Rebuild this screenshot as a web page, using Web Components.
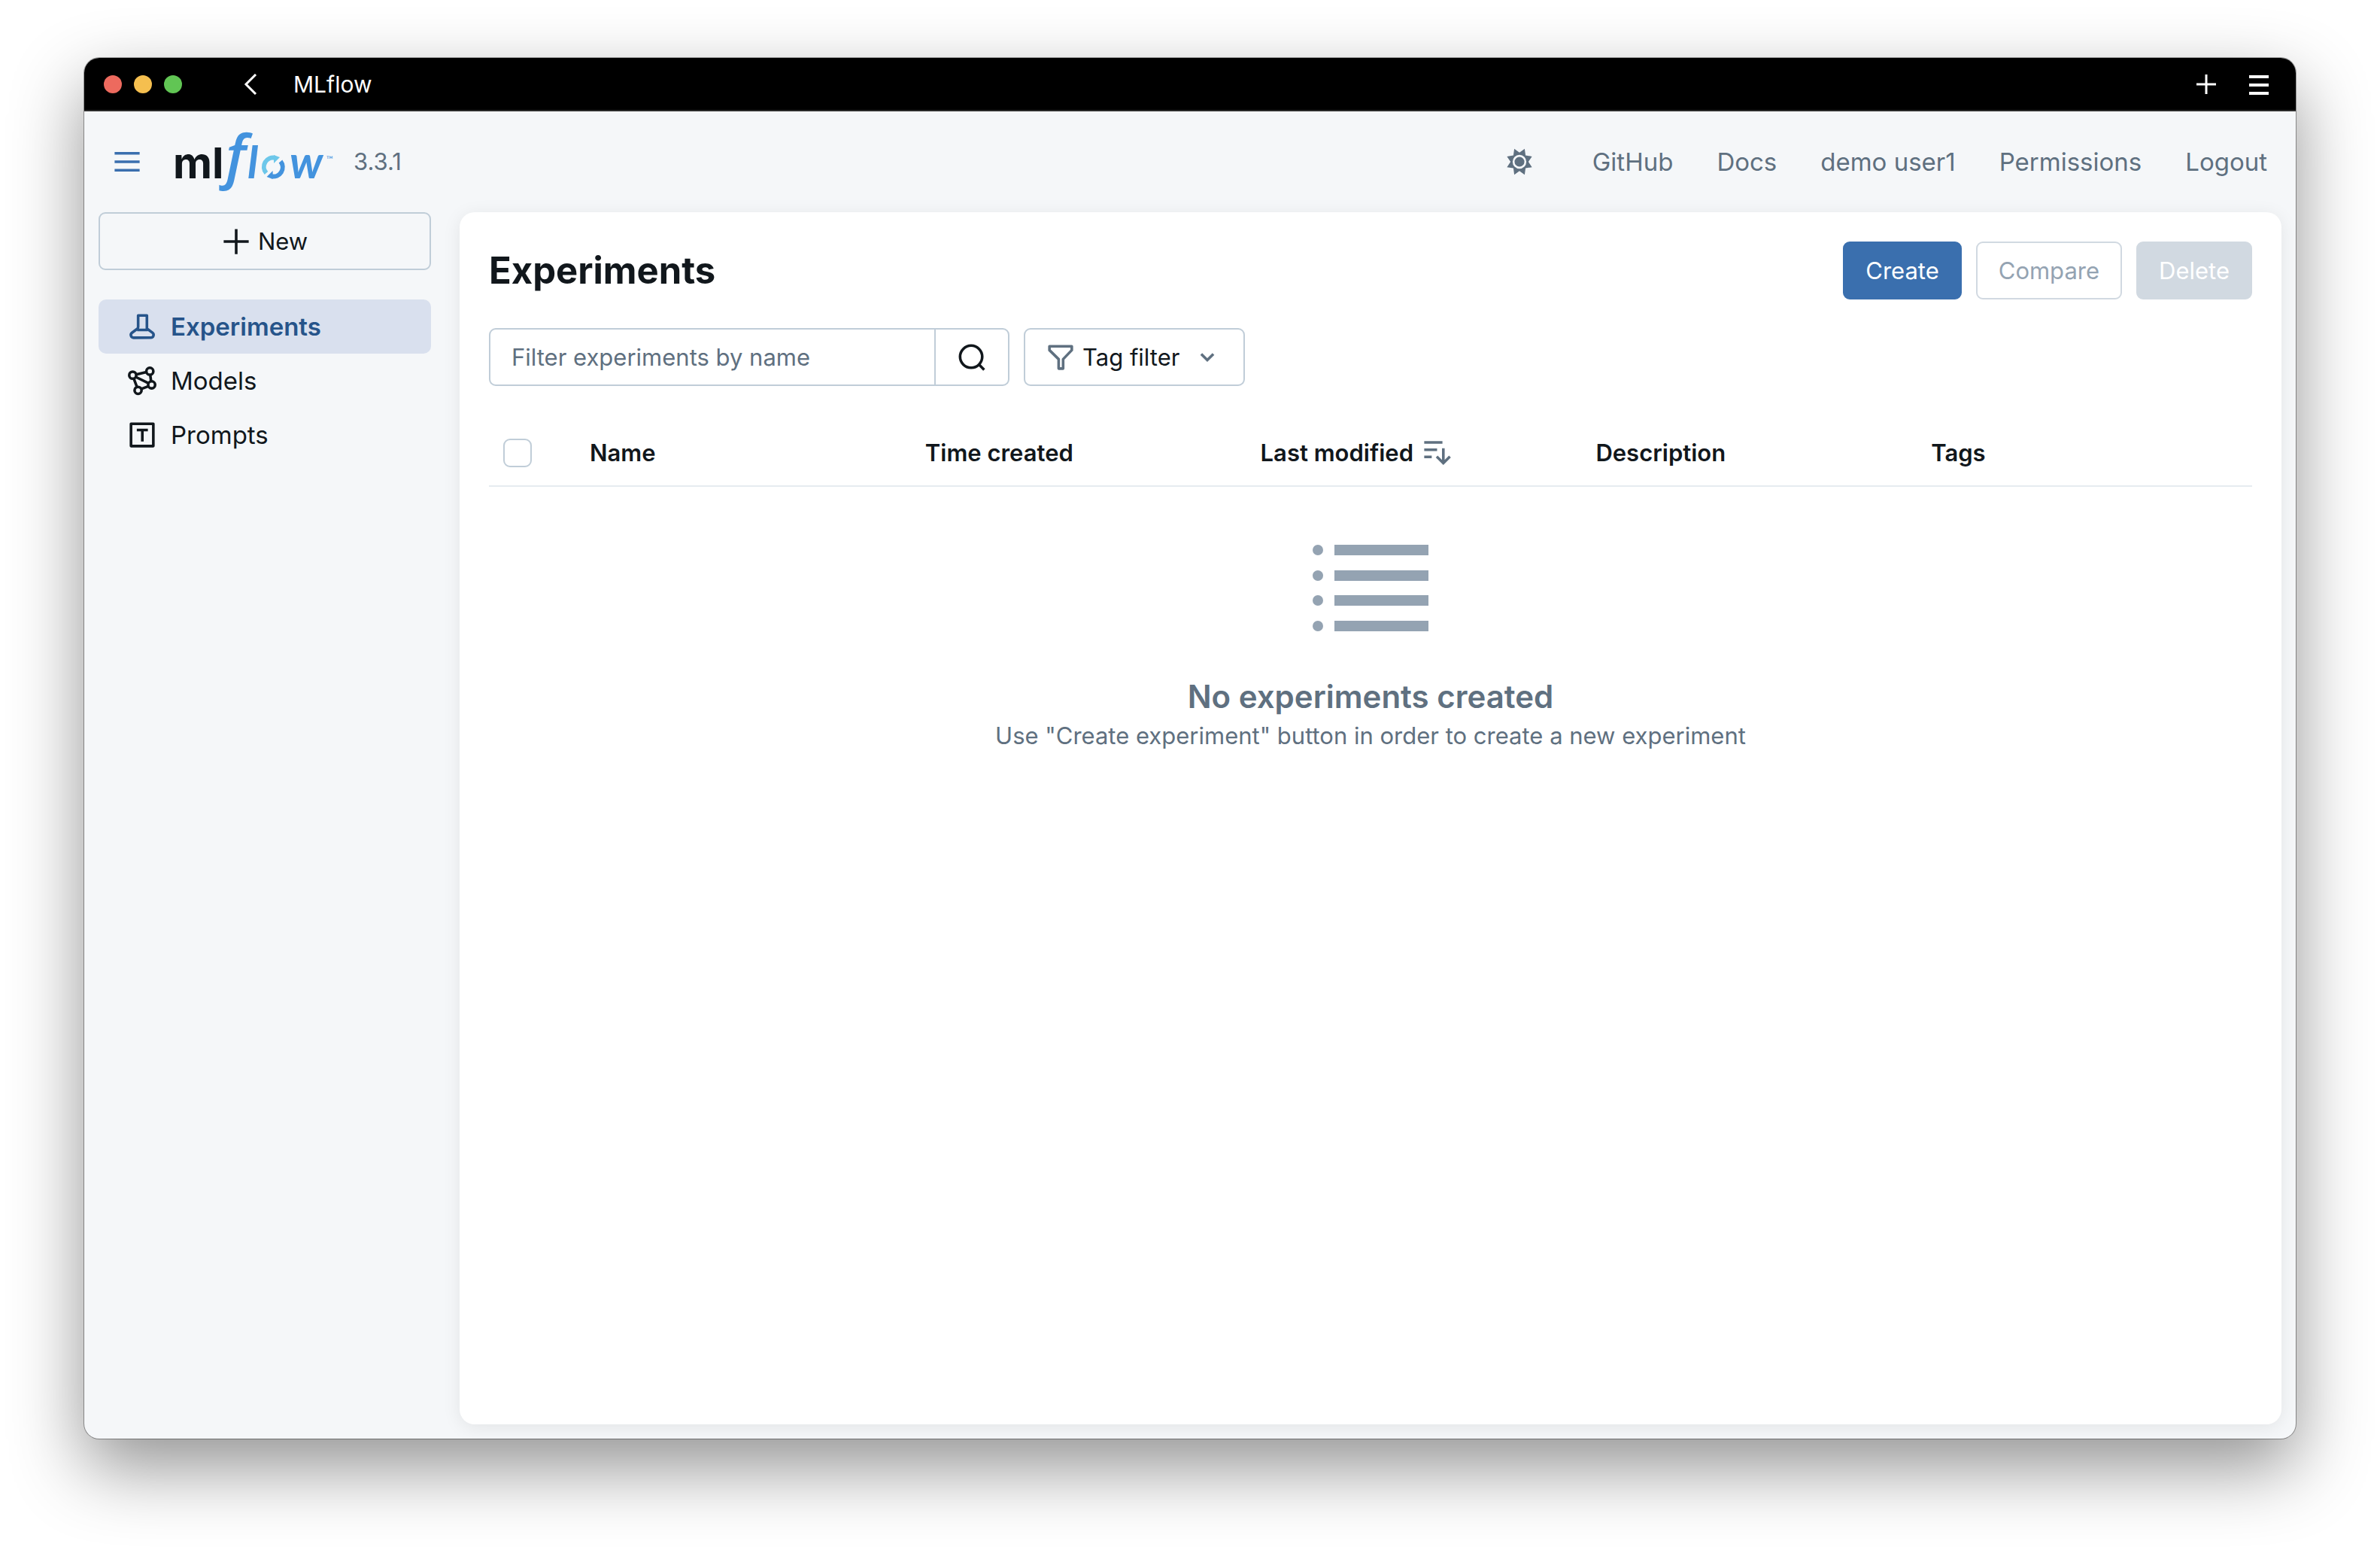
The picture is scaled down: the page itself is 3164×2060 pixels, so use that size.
<!DOCTYPE html>
<html lang="en">
<head>
<meta charset="utf-8">
<title>MLflow</title>
<style>
  body {
    --text: #11171c;
    --muted: #5f7080;
    --border: #c0cdd8;
    --primary: #3a6fae;
    --bg: #f5f7f9;
    display: flex;
    box-sizing: border-box;
    min-height: 100vh;
    margin: 0;
    padding: 77px 112px 148px;
    background: #fff;
    color: var(--text);
    font: 31px/48px Inter, "Liberation Sans", sans-serif;
  }
</style>
</head>
<body>
<app-window heading="MLflow">
  <app-header version="3.3.1">
    <header-link href="#github">GitHub</header-link>
    <header-link href="#docs">Docs</header-link>
    <header-link href="#user">demo user1</header-link>
    <header-link href="#permissions">Permissions</header-link>
    <header-link href="#logout">Logout</header-link>
  </app-header>
  <app-layout>
    <side-nav slot="nav">
      <nav-item icon="beaker" href="#experiments" active>Experiments</nav-item>
      <nav-item icon="models" href="#models">Models</nav-item>
      <nav-item icon="prompts" href="#prompts">Prompts</nav-item>
    </side-nav>
    <experiments-page></experiments-page>
  </app-layout>
</app-window>

<script>
const ICONS = {
  menu: '<path fill="currentColor" d="M15 4H1V2.5h14zm0 4.75H1v-1.5h14zm0 4.75H1V12h14z"/>',
  plus: '<path fill="currentColor" d="M7.25 7.25V1h1.5v6.25H15v1.5H8.75V15h-1.5V8.75H1v-1.5z"/>',
  search: '<circle cx="7.6" cy="7.6" r="6.2"/><path d="M11.9 11.9l3 3"/>',
  filter: '<path stroke-linejoin="round" d="M1.75 1.75h12.5v2.2L9.4 9v5.25H6.9V9L1.75 3.95z"/>',
  chevron: '<path d="M4.6 6.1L8 9.5l3.4-3.4"/>',
  sort: '<path d="M1 2.1h10.2M1 6.2h7.2M1 10.2h4.2M11.7 5.4v8.4M8 10l3.7 3.7 3.7-3.7"/>',
  beaker: '<path stroke-linejoin="round" d="M5.75 1.75h4.9v7.4l3.1 2.3a1.55 1.55 0 0 1-.9 2.8H3.2a1.55 1.55 0 0 1-.9-2.8l3.1-2.3q.35-.4.35-1zM5.2 9.9h5.9"/>',
  models: '<circle cx="2.7" cy="4.9" r="1.95"/><circle cx="12.3" cy="2.7" r="1.95"/><circle cx="13.3" cy="10.3" r="1.95"/><circle cx="5.7" cy="13.4" r="1.95"/><path d="M4.6 4.5l5.8-1.3M12.5 4.6l.5 3.8M4.4 5.9l7.2 3.5M3.3 6.8l1.8 4.7M7.5 12.6l4-1.5"/>',
  prompts: '<rect x="1.75" y="1.75" width="12.5" height="12.5" stroke-linejoin="round"/><path d="M5 5.3h6.2M8.1 5.3v6.4"/>',
  sun: '<path fill="currentColor" stroke="none" d="M8 2.8l2.9-2.1.5 3.7 3.6.6-2 3 2 3-3.6.6-.5 3.7L8 13.2l-2.9 2.1-.5-3.7L1 11l2-3-2-3 3.6-.6.5-3.7z"/><circle cx="8" cy="8" r="3.3" fill="currentColor" stroke="var(--bg)" stroke-width="1.1"/>'
}

function define(name, template) {
  customElements.define(name, class extends HTMLElement {
    constructor() {
      super()
      this.attachShadow({mode: 'open'})
    }

    connectedCallback() {
      this.shadowRoot.innerHTML = typeof template === 'function' ? template(this) : template
    }
  })
}

define('ui-icon', el => `<style>
    :host { display: inline-flex; flex: none; width: 38px; height: 38px; }
    svg { width: 100%; height: 100%; overflow: visible; }
  </style>
  <svg viewBox="0 0 16 16" fill="none" stroke-width="1.5" ${/menu|plus/.test(el.getAttribute('name')) ? '' : 'stroke="currentColor"'} aria-hidden="true">${ICONS[el.getAttribute('name')]}</svg>`)

define('app-window', el => `<style>
    :host {
      display: flex;
      flex: 1;
      flex-direction: column;
      overflow: hidden;
      border-radius: 20px;
      background: var(--bg);
      box-shadow: 0 0 0 1px rgba(0,0,0,0.35), 0 38px 96px rgba(0,0,0,0.43);
    }
    .bar {
      display: flex;
      align-items: center;
      height: 69px;
      padding: 0 36px 0 26px;
      border-bottom: 2px solid #2a2a2a;
      background: #000;
      color: #fff;
      font-size: 30px;
    }
    .lights { display: flex; gap: 16px; }
    .lights i { width: 24px; height: 24px; border-radius: 50%; background: #ed6a5e; }
    .lights i:nth-child(2) { background: #f5bf4f; }
    .lights i:nth-child(3) { background: #61c554; }
    button { display: flex; padding: 0; border: 0; background: none; color: inherit; }
    .back { margin: 0 48px 0 82px; }
    .title { flex: 1; }
    .add { margin-right: 44px; }
    svg { fill: none; stroke: currentColor; stroke-width: 3; }
    .burger { stroke-width: 4; }
  </style>
  <div class="bar">
    <span class="lights"><i></i><i></i><i></i></span>
    <button class="back" aria-label="Back"><svg width="18" height="28"><path d="M16 1L3 14l13 13"/></svg></button>
    <span class="title">${el.getAttribute('heading')}</span>
    <button class="add" aria-label="New tab"><svg width="26" height="28"><path d="M0 14h26M13 1v26"/></svg></button>
    <button aria-label="Menu"><svg class="burger" width="26" height="28"><path d="M0 4h26M0 15h26M0 26h26"/></svg></button>
  </div>
  <slot></slot>`)

define('mlflow-logo', `<style>
    :host { display: block; }
    svg { display: block; overflow: visible; }
    .blue { fill: #4393de; }
    .ml { font: 700 57px Inter, sans-serif; }
    .slant { font: italic 700 60px Lato, sans-serif; }
    .f { font: italic 600 78px "Open Sans", sans-serif; }
    .tm { font: 12px Lato, sans-serif; }
  </style>
  <svg width="214" height="84" viewBox="0 0 214 84" role="img" aria-label="mlflow">
    <text class="ml" x="0" y="64" fill="#11171c">ml</text>
    <text class="blue f" x="70" y="62">f</text>
    <text class="blue slant" x="99" y="64">l</text>
    <path d="M124 57A12.300 12.300 0 0 1 136 36.800" fill="none" stroke="#6cc7ea" stroke-width="6"/>
    <path d="M134 33l8 3-8 8z" fill="#6cc7ea"/>
    <path d="M143 41.500A12.300 12.300 0 0 1 130.600 61.200" fill="none" stroke="#4393de" stroke-width="6"/>
    <path d="M132.600 65l-8-3 8-8z" fill="#4393de"/>
    <text class="blue slant" x="155" y="64">w</text>
    <text class="blue tm" x="204" y="43">™</text>
  </svg>`)

define('header-link', el => `<style>
    :host { display: block; }
    a { color: var(--muted); font-size: 33px; text-decoration: none; }
  </style>
  <a href="${el.getAttribute('href')}"><slot></slot></a>`)

define('app-header', el => `<style>
    :host {
      display: flex;
      align-items: center;
      height: 134px;
      padding: 0 38px;
      color: var(--muted);
    }
    button { display: flex; padding: 0; border: 0; background: none; color: var(--muted); }
    .menu { margin-right: 42px; color: var(--primary); }
    .version { flex: 1; margin-left: 26px; }
    nav { display: flex; gap: 58px; margin-left: 78px; }
  </style>
  <button class="menu" aria-label="Toggle sidebar"><ui-icon name="menu"></ui-icon></button>
  <mlflow-logo></mlflow-logo>
  <span class="version">${el.getAttribute('version')}</span>
  <button aria-label="Switch theme"><ui-icon name="sun"></ui-icon></button>
  <nav><slot></slot></nav>`)

define('app-layout', `<style>
    :host { display: flex; flex: 1; padding: 0 19px 19px; gap: 38px; }
    main {
      flex: 1;
      min-width: 0;
      padding: 39px;
      border-radius: 20px;
      background: #fff;
      box-shadow: 0 4px 24px rgba(0,0,0,0.08);
    }
  </style>
  <slot name="nav"></slot>
  <main><slot></slot></main>`)

define('side-nav', `<style>
    :host { display: flex; flex-direction: column; flex: none; width: 442px; }
    ui-button { margin-bottom: 39px; }
  </style>
  <ui-button icon="plus">New</ui-button>
  <nav><slot></slot></nav>`)

define('nav-item', el => `<style>
    :host { display: block; }
    a {
      display: flex;
      align-items: center;
      gap: 19px;
      height: 72px;
      padding-left: 39px;
      border-radius: 10px;
      color: inherit;
      font-size: 33px;
      text-decoration: none;
    }
    :host([active]) a { background: #d9e0ee; color: #26548a; font-weight: 600; }
  </style>
  <a href="${el.getAttribute('href')}"><ui-icon name="${el.getAttribute('icon')}"></ui-icon><slot></slot></a>`)

define('ui-button', el => `<style>
    :host { display: flex; }
    button {
      display: flex;
      flex: 1;
      align-items: center;
      justify-content: center;
      gap: 10px;
      height: 77px;
      padding: 0 28px;
      border: 2px solid var(--border);
      border-radius: 9px;
      background: none;
      color: inherit;
      font: inherit;
    }
    :host([kind=primary]) button { border-color: var(--primary); background: var(--primary); color: #fff; }
    button:disabled { border-color: #d1d9e1; color: #94a3b2; }
    :host([kind=danger]) button { background: #d1d9e1; color: #fff; }
    .lead { color: var(--icon-color, inherit); }
    .caret { margin: 0 1px 0 8px; color: var(--muted); }
  </style>
  <button ${el.hasAttribute('disabled') ? 'disabled' : ''}>
    ${el.hasAttribute('icon') ? `<ui-icon class="lead" name="${el.getAttribute('icon')}"></ui-icon>` : ''}
    <slot></slot>
    ${el.hasAttribute('caret') ? '<ui-icon class="caret" name="chevron"></ui-icon>' : ''}
  </button>`)

define('search-box', el => `<style>
    :host {
      display: flex;
      box-sizing: border-box;
      width: 692px;
      height: 77px;
      border: 2px solid var(--border);
      border-radius: 9px;
    }
    input {
      flex: 1;
      min-width: 0;
      padding: 0 28px;
      border: 0;
      outline: 0;
      background: none;
      color: inherit;
      font: inherit;
    }
    input::placeholder { color: var(--muted); opacity: 1; }
    button {
      display: flex;
      align-items: center;
      justify-content: center;
      width: 98px;
      padding: 0;
      border: 0;
      border-left: 2px solid var(--border);
      background: none;
      color: inherit;
    }
  </style>
  <input type="text" aria-label="${el.getAttribute('placeholder')}" placeholder="${el.getAttribute('placeholder')}">
  <button aria-label="Search"><ui-icon name="search"></ui-icon></button>`)

define('empty-state', el => `<style>
    :host {
      display: flex;
      flex-direction: column;
      align-items: center;
      padding-top: 77px;
      color: var(--muted);
    }
    svg { margin-bottom: 58px; fill: #94a3b2; }
    h2 { margin: 0; font-size: 42px; line-height: 56px; font-weight: 600; }
  </style>
  <svg width="154" height="116" viewBox="0 0 154 116" aria-hidden="true">
    ${[7, 41, 74, 108].map(y => `<circle cx="7" cy="${y}" r="7"/><rect x="29" y="${y - 7}" width="125" height="14"/>`).join('')}
  </svg>
  <h2>${el.getAttribute('heading')}</h2>
  <slot></slot>`)

define('experiments-table', `<style>
    :host { display: block; }
    table { width: 100%; border-collapse: collapse; table-layout: fixed; }
    th {
      height: 86px;
      padding: 0 19px;
      border-bottom: 2px solid #e6ebf0;
      font-weight: 600;
      text-align: left;
    }
    td { padding: 0; }
    .check { width: 77px; }
    input {
      display: block;
      appearance: none;
      width: 38px;
      height: 38px;
      margin: 0;
      border: 2px solid var(--border);
      border-radius: 9px;
      background: #fff;
    }
    .sorted { display: flex; align-items: center; gap: 12px; }
    ui-icon { color: var(--muted); }
  </style>
  <table>
    <thead>
      <tr>
        <th class="check"><input type="checkbox" aria-label="Select all"></th>
        <th>Name</th>
        <th>Time created</th>
        <th><span class="sorted">Last modified <ui-icon name="sort"></ui-icon></span></th>
        <th>Description</th>
        <th>Tags</th>
      </tr>
    </thead>
    <tbody>
      <tr>
        <td colspan="6">
          <empty-state heading="No experiments created">Use "Create experiment" button in order to create a new experiment</empty-state>
        </td>
      </tr>
    </tbody>
  </table>`)

define('experiments-page', `<style>
    :host { display: block; }
    .row { display: flex; align-items: center; gap: 19px; margin-bottom: 38px; }
    h1 { flex: 1; margin: 0; font-size: 49px; line-height: 67px; font-weight: 700; }
    .filters { margin-bottom: 46px; }
    .filters ui-button { --icon-color: var(--muted); }
  </style>
  <div class="row">
    <h1>Experiments</h1>
    <ui-button kind="primary">Create</ui-button>
    <ui-button disabled>Compare</ui-button>
    <ui-button kind="danger" disabled>Delete</ui-button>
  </div>
  <div class="row filters">
    <search-box placeholder="Filter experiments by name"></search-box>
    <ui-button icon="filter" caret>Tag filter</ui-button>
  </div>
  <experiments-table></experiments-table>`)
</script>
</body>
</html>
